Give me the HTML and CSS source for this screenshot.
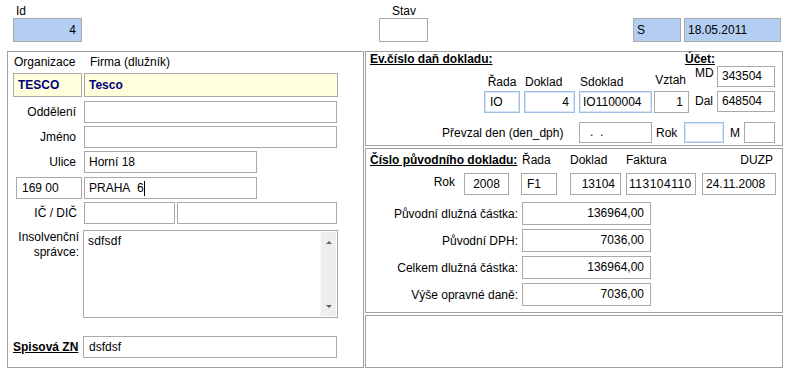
FILE: index.html
```html
<!DOCTYPE html>
<html lang="cs">
<head>
    <meta charset="UTF-8">
    <title>Opravný daňový doklad</title>
    <link rel="stylesheet" href="styles.css">
</head>
<body>
    <div class="topbar">
        <div class="grp grp-id">
            <div class="cap">Id</div>
            <div class="fld tall blue num w-id">4</div>
        </div>
        <div class="grp grp-stav">
            <div class="cap">Stav</div>
            <div class="fld tall w-stav"></div>
        </div>
        <div class="grp grp-date">
            <div class="fld tall blue w-s">S</div>
            <div class="fld tall blue w-date">18.05.2011</div>
        </div>
    </div>

    <div class="main">
        <!-- dluznik -->
        <div class="panel left">
            <div class="row head">
                <span class="cap-org">Organizace</span>
                <span>Firma (dlužník)</span>
            </div>
            <div class="row r1">
                <div class="fld tall yel w69">TESCO</div>
                <div class="fld tall yel w254">Tesco</div>
            </div>
            <div class="row r2">
                <label class="lab">Oddělení</label>
                <div class="fld w253"></div>
            </div>
            <div class="row r3">
                <label class="lab">Jméno</label>
                <div class="fld w253"></div>
            </div>
            <div class="row r3">
                <label class="lab">Ulice</label>
                <div class="fld w173">Horní 18</div>
            </div>
            <div class="row r2">
                <div class="fld w66 psc">169 00</div>
                <div class="fld w173">PRAHA&nbsp; 6<span class="caret"></span></div>
            </div>
            <div class="row r3">
                <label class="lab lab-ic">IČ / DIČ</label>
                <div class="fld w91"></div>
                <div class="fld w160"></div>
            </div>
            <div class="row r-ta">
                <label class="lab lab-ins">Insolvenční správce:</label>
                <div class="ta">
                    <div class="ta-text">sdfsdf</div>
                    <div class="sb">
                        <span class="arr up"></span>
                        <span class="arr down"></span>
                    </div>
                </div>
            </div>
            <div class="row r-zn">
                <label class="lab lab-zn">Spisová ZN</label>
                <div class="fld w254 zn">dsfdsf</div>
            </div>
        </div>

        <div class="rcol">
            <!-- cislo danoveho dokladu -->
            <div class="panel ev">
                <div class="ev-grid">
                    <div class="title ev-title">Ev.číslo daň dokladu:</div>
                    <div class="title ucet">Účet:</div>

                    <div class="h h-rada">Řada</div>
                    <div class="h h-dok">Doklad</div>
                    <div class="h h-sdok">Sdoklad</div>
                    <div class="h h-vztah">Vztah</div>
                    <div class="l-md">MD</div>
                    <div class="fld c10 r2s">343504</div>

                    <div class="fld bl c2 r3s">IO</div>
                    <div class="fld bl num c4 r3s">4</div>
                    <div class="fld bl c6 r3s sdok">IO1100004</div>
                    <div class="fld num c8 r3s">1</div>
                    <div class="l-dal">Dal</div>
                    <div class="fld c10 r3s dal">648504</div>
                </div>
                <div class="prevzal">
                    <span class="l-prev">Převzal den (den_dph)</span>
                    <div class="fld w73 dots">.&nbsp; .</div>
                    <span class="l-rok">Rok</span>
                    <div class="fld bl w40"></div>
                    <span class="l-m">M</span>
                    <div class="fld w31"></div>
                </div>
            </div>

            <!-- puvodni doklad -->
            <div class="panel orig">
                <div class="o-grid">
                    <div class="title o-title">Číslo původního dokladu:</div>
                    <div class="oh o-rada">Řada</div>
                    <div class="oh o-dok">Doklad</div>
                    <div class="oh o-fak">Faktura</div>
                    <div class="oh o-duzp">DUZP</div>

                    <div class="o-rok">Rok</div>
                    <div class="fld c2 ctr">2008</div>
                    <div class="fld c4 f1">F1</div>
                    <div class="fld num c6">13104</div>
                    <div class="fld c8 fak">113104110</div>
                    <div class="fld c10 duzp">24.11.2008</div>
                </div>
                <div class="amounts">
                    <span class="a-lab">Původní dlužná částka:</span>
                    <div class="fld num amt">136964,00</div>
                    <span class="a-lab">Původní DPH:</span>
                    <div class="fld num amt">7036,00</div>
                    <span class="a-lab">Celkem dlužná částka:</span>
                    <div class="fld num amt">136964,00</div>
                    <span class="a-lab">Výše opravné daně:</span>
                    <div class="fld num amt">7036,00</div>
                </div>
            </div>

            <div class="panel empty"></div>
        </div>
    </div>
</body>
</html>
```

FILE: styles.css
```css
body {
    margin: 0;
    width: 788px;
    height: 373px;
    overflow: hidden;
    background-color: #ffffff;
    font-family: "Liberation Sans", Arial, sans-serif;
    font-size: 12px;
    line-height: 14px;
    color: #000;
}

/* pole formulare */
.fld {
    box-sizing: border-box;
    flex: none;
    height: 22px;
    line-height: 20px;
    border: 1px solid #a9a9a9;
    background-color: #fff;
    padding: 0 4px;
    white-space: nowrap;
    overflow: hidden;
}

.fld.tall {
    height: 24px;
    line-height: 22px;
}

.num {
    text-align: right;
}

.blue {
    background-color: #b3cef0;
}

.yel {
    background-color: #ffffdc;
    color: #000080;
    font-weight: bold;
}

.bl {
    border-color: #9fbfe6;
    box-shadow: inset 0 0 0 1px #d6e5f7;
}

.title {
    font-weight: bold;
    text-decoration: underline;
}

/* horni lista */
.topbar {
    display: flex;
    align-items: flex-start;
    box-sizing: border-box;
    height: 51px;
    padding: 4px 7px 0 13px;
}

.cap {
    height: 14px;
    padding-left: 3px;
}

.w-id { width: 69px; padding-right: 5px; }
.grp-stav { margin-left: 297px; }
.grp-stav .cap { padding-left: 13px; }
.w-stav { width: 49px; }

.grp-date {
    display: flex;
    gap: 3px;
    margin-left: auto;
    padding-top: 14px;
}

.w-s { width: 48px; padding-left: 3px; }
.w-date { width: 97px; padding-left: 3px; }

/* hlavni cast */
.main {
    display: flex;
    gap: 1px;
    margin-left: 7px;
}

.panel {
    box-sizing: border-box;
    border: 1px solid #a0a0a0;
}

.left {
    width: 357px;
    height: 317px;
    padding: 3px 0 0 5px;
}

.row {
    display: flex;
    align-items: center;
    gap: 2px;
}

.head { height: 14px; }
.cap-org { width: 74px; padding-left: 1px; }
.r1 { margin-top: 4px; }
.r2 { margin-top: 4px; }
.r3 { margin-top: 3px; }
.r-ta { margin-top: 6px; align-items: flex-start; }
.r-zn { margin-top: 18px; }

.lab {
    box-sizing: border-box;
    flex: none;
    width: 69px;
    text-align: right;
    padding-right: 6px;
}

.lab-ic { padding-right: 5px; }

.lab-ins {
    padding-right: 3px;
    line-height: 15px;
}

.lab-zn {
    text-align: left;
    padding-right: 0;
    font-weight: bold;
    text-decoration: underline;
    margin-right: -1px;
}

.w69 { width: 69px; }
.w254 { width: 254px; }
.w253 { width: 253px; }
.w173 { width: 173px; }
.w66 { width: 66px; }
.w91 { width: 91px; }
.w160 { width: 160px; }

.psc {
    margin-left: 3px;
    padding-left: 5px;
}

.caret {
    display: inline-block;
    width: 1px;
    height: 15px;
    background-color: #000;
    vertical-align: middle;
}

.zn { padding-left: 5px; }

.ta {
    box-sizing: border-box;
    display: flex;
    width: 255px;
    height: 88px;
    margin-left: -1px;
    border: 1px solid #a9a9a9;
}

.ta-text {
    flex: 1;
    padding: 3px 4px;
    letter-spacing: 0.2px;
}

.sb {
    display: flex;
    flex-direction: column;
    align-items: center;
    justify-content: space-between;
    width: 16px;
    margin: 1px 1px 1px 0;
    padding: 9px 0 8px;
    box-sizing: border-box;
    background-color: #eeeeee;
    border-left: 1px solid #f7f7f7;
}

.arr {
    width: 0;
    height: 0;
    border-left: 3px solid transparent;
    border-right: 3px solid transparent;
}

.arr.up { border-bottom: 3px solid #606060; }
.arr.down { border-top: 3px solid #606060; }

/* pravy sloupec */
.rcol {
    display: flex;
    flex-direction: column;
    gap: 2px;
    width: 418px;
}

.ev { height: 95px; }
.orig { height: 165px; padding-top: 4px; }
.empty { height: 53px; }

.ev-grid {
    display: grid;
    grid-template-columns: 118px 36px 4px 51px 4px 73px 2px 35px 28px 58px;
    grid-template-rows: 14px 25px 22px;
}

.ev-title {
    grid-column: 1 / 8;
    grid-row: 1;
    padding-left: 4px;
    white-space: nowrap;
}

.ucet {
    grid-column: 8 / 10;
    grid-row: 1;
    text-align: right;
    padding-right: 2px;
}

.h {
    grid-row: 2;
    align-self: end;
    padding-bottom: 2px;
    white-space: nowrap;
}

.h-rada { grid-column: 2; text-align: center; }
.h-dok { grid-column: 4; padding-left: 1px; }
.h-sdok { grid-column: 6; padding-left: 1px; }
.h-vztah { grid-column: 8; text-align: right; padding-right: 3px; padding-bottom: 4px; }

.l-md {
    grid-column: 9;
    grid-row: 2;
    padding-left: 6px;
}

.l-dal {
    grid-column: 9;
    grid-row: 3;
    align-self: center;
    padding-left: 6px;
    margin-top: -2px;
}

.c2 { grid-column: 2; }
.c4 { grid-column: 4; }
.c6 { grid-column: 6; }
.c8 { grid-column: 8; }
.c10 { grid-column: 10; }
.r2s { grid-row: 2; height: 21px; line-height: 19px; }
.r3s { grid-row: 3; }
.dal { height: 21px; line-height: 19px; }

.ev-grid .c2 { padding-left: 5px; }
.ev-grid .num { padding-right: 5px; }
.sdok { padding-left: 3px; }

.prevzal {
    display: flex;
    align-items: center;
    margin-top: 9px;
    padding-left: 76px;
}

.prevzal .fld {
    height: 21px;
    line-height: 19px;
}

.l-prev { width: 137px; }
.w73 { width: 73px; }
.dots { padding-left: 10px; }
.l-rok { width: 28px; margin-left: 4px; }
.w40 { width: 40px; }
.l-m { width: 14px; margin-left: 6px; }
.w31 { width: 31px; }

.o-grid {
    display: grid;
    grid-template-columns: 98px 45px 12px 36px 13px 51px 5px 70px 6px 74px;
    grid-template-rows: 14px 22px;
    row-gap: 6px;
}

.o-title {
    grid-column: 1 / 4;
    grid-row: 1;
    padding-left: 4px;
    white-space: nowrap;
}

.oh { grid-row: 1; white-space: nowrap; }
.o-rada { grid-column: 4; padding-left: 1px; }
.o-dok { grid-column: 6; }
.o-fak { grid-column: 8; }
.o-duzp { grid-column: 10; text-align: right; padding-right: 3px; }

.o-rok {
    grid-column: 1;
    grid-row: 2;
    text-align: right;
    padding: 2px 9px 0 0;
}

.o-grid .fld { grid-row: 2; }
.ctr { text-align: center; }
.f1 { padding-left: 5px; }
.o-grid .num { padding-right: 5px; }
.fak { padding-left: 2px; letter-spacing: 0.5px; }
.duzp { padding-left: 3px; }

.amounts {
    display: grid;
    grid-template-columns: 152px 129px;
    grid-auto-rows: 23px;
    column-gap: 4px;
    row-gap: 4px;
    margin-top: 7px;
}

.a-lab {
    align-self: center;
    text-align: right;
    white-space: nowrap;
}

.amt {
    height: 23px;
    line-height: 21px;
    padding-right: 6px;
}
```
